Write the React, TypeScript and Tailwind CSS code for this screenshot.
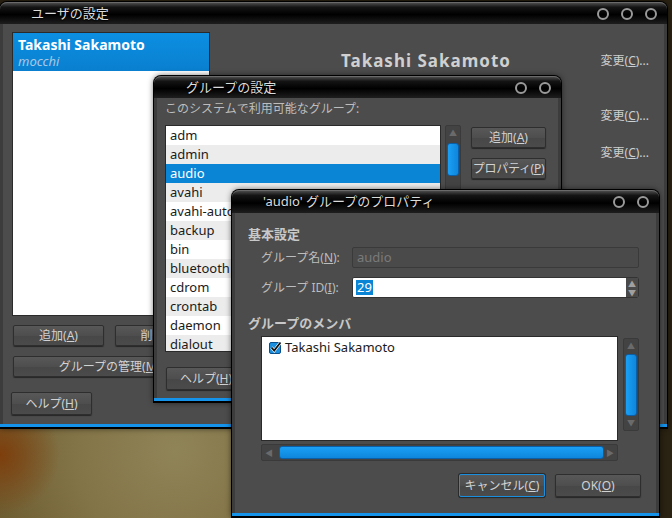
import * as React from 'react';

const FONT = "font-['Noto_Sans','Noto_Sans_CJK_JP',sans-serif]";

function Rings({ count }: { count: number }) {
  return (
    <div className="flex items-center gap-[12px] pr-[10px]">
      {Array.from({ length: count }).map((_, i) => (
        <span key={i} className="block h-[12px] w-[12px] rounded-full border-[2px] border-[#9a9a9a]" />
      ))}
    </div>
  );
}

interface WinProps {
  title: string;
  titlePad: string;
  rings: number;
  className: string;
  titleH: string;
  children: React.ReactNode;
}

function Win({ title, titlePad, rings, className, titleH, children }: WinProps) {
  return (
    <div className={`absolute flex flex-col rounded-t-[7px] bg-[#3c3c3c] shadow-[0_0_6px_rgba(0,0,0,0.7)] ring-1 ring-black ${className}`}>
      <div className={`flex ${titleH} shrink-0 items-center justify-between rounded-t-[7px] border-t border-[#6a6a6a] bg-[linear-gradient(#4a4a4a_0%,#141414_20%,#000_55%,#1e1e1e_100%)]`}>
        <span className={`${titlePad} text-[13px] text-[#dcdcdc] [text-shadow:0_1px_1px_#000]`}>{title}</span>
        <Rings count={rings} />
      </div>
      <div className="flex min-h-0 flex-1 flex-col border-x-[3px] border-[#3c3c3c] bg-[#4c4c4c]">{children}</div>
      <div className="h-[3px] shrink-0 bg-[#1592ea]" />
      <div className="h-[1px] shrink-0 bg-black" />
    </div>
  );
}

function Btn({ children, className = '', focus = false }: { children: React.ReactNode; className?: string; focus?: boolean }) {
  return (
    <div
      className={`flex items-center justify-center overflow-hidden whitespace-nowrap rounded-[2px] border text-[12px] text-[#d2d2d2] shadow-[0_1px_1px_rgba(0,0,0,0.5)] bg-[linear-gradient(#585858,#4e4e4e_50%,#474747_51%,#4b4b4b)] ${
        focus ? 'border-[#1a8fe0] ring-1 ring-[#2a2a2a]' : 'border-[#2e2e2e]'
      } ${className}`}
    >
      {children}
    </div>
  );
}

function VScroll({ className, thumb }: { className: string; thumb: string }) {
  return (
    <div className={`flex flex-col items-center rounded-[2px] border border-[#3a3a3a] bg-[#434343] ${className}`}>
      <span className="mt-[3px] text-[8px] leading-none text-[#6a6a6a]">▲</span>
      <div className={`w-[12px] rounded-[3px] border border-[#0a5fa8] bg-[linear-gradient(90deg,#1aa0f5,#0e86dc)] ${thumb}`} />
      <div className="flex-1" />
      <span className="mb-[3px] text-[8px] leading-none text-[#6a6a6a]">▼</span>
    </div>
  );
}

const groups = ['adm', 'admin', 'audio', 'avahi', 'avahi-autoipd', 'backup', 'bin', 'bluetooth', 'cdrom', 'crontab', 'daemon', 'dialout'];

export default function App() {
  return (
    <div
      className={`${FONT} relative h-[518px] w-[672px] overflow-hidden bg-[radial-gradient(circle_at_0_455px,#7e3e0c,transparent_60px),radial-gradient(circle_at_175px_450px,#8f8458,#837447_100px,#6a5a2e_200px,#4a3c1c_340px,#2a2212_480px)]`}
    >
      {/* ユーザの設定 */}
      <Win title="ユーザの設定" titlePad="pl-[31px]" rings={3} titleH="h-[22px]" className="left-[0px] top-[2px] h-[426px] w-[667px]">
        <div className="flex flex-1 flex-row">
          <div className="flex w-[210px] flex-col pl-[9px] pt-[8px]">
            <div className="h-[284px] w-[198px] border border-[#2a2a2a] bg-white">
              <div className="flex h-[38px] flex-col justify-center bg-[linear-gradient(#0c8fe2,#0a7fcf)] pl-[5px]">
                <span className="text-[14px] font-bold leading-[17px] text-white">Takashi Sakamoto</span>
                <span className="text-[13px] italic leading-[16px] text-[#a8c8e4]">mocchi</span>
              </div>
            </div>
            <div className="mt-[9px] flex gap-[11px] pl-[1px]">
              <Btn className="h-[21px] w-[91px]">
                追加(<u>A</u>)
              </Btn>
              <Btn className="h-[21px] w-[91px]">
                削除(<u>D</u>)
              </Btn>
            </div>
            <Btn className="ml-[1px] mt-[10px] h-[21px] w-[193px]">
              グループの管理(<u>M</u>)
            </Btn>
            <Btn className="-ml-[1px] mt-[15px] h-[23px] w-[81px]">
              ヘルプ(<u>H</u>)
            </Btn>
          </div>
          <div className="flex flex-1 flex-col pt-[26px]">
            <div className="flex h-[22px] items-center">
              <span className="ml-[128px] text-[17px] font-bold tracking-[1px] text-[#d0d0d0]">Takashi Sakamoto</span>
              <span className="ml-auto mr-[15px] text-[12px] text-[#cfcfcf]">
                変更(<u>C</u>)...
              </span>
            </div>
            <div className="mt-[33px] flex h-[22px] items-center justify-end">
              <span className="mr-[15px] text-[12px] text-[#cfcfcf]">
                変更(<u>C</u>)...
              </span>
            </div>
            <div className="mt-[15px] flex h-[22px] items-center justify-end">
              <span className="mr-[15px] text-[12px] text-[#cfcfcf]">
                変更(<u>C</u>)...
              </span>
            </div>
          </div>
        </div>
      </Win>

      {/* グループの設定 */}
      <Win title="グループの設定" titlePad="pl-[32px]" rings={2} titleH="h-[22px]" className="left-[154px] top-[76px] h-[326px] w-[407px]">
        <div className="flex flex-1 flex-col pl-[8px] pt-[1px]">
          <span className="text-[12px] leading-[20px] text-[#bdbdbd]">このシステムで利用可能なグループ:</span>
          <div className="mt-[6px] flex">
            <div className="h-[227px] w-[276px] overflow-hidden border border-[#2a2a2a] bg-white">
              {groups.map((g, i) => (
                <div
                  key={g}
                  className={`flex h-[19px] items-center whitespace-nowrap pl-[4px] text-[13px] ${
                    i === 2 ? 'bg-[#0a85d6] text-white' : i % 2 === 1 ? 'bg-[#ececec] text-[#1a1a1a]' : 'bg-white text-[#1a1a1a]'
                  }`}
                >
                  {g}
                </div>
              ))}
            </div>
            <VScroll className="ml-[4px] h-[227px] w-[16px]" thumb="mt-[6px] h-[33px]" />
            <div className="ml-[10px] flex flex-col gap-[10px] pt-[2px]">
              <Btn className="h-[21px] w-[75px]">
                追加(<u>A</u>)
              </Btn>
              <Btn className="h-[21px] w-[75px] tracking-[-0.3px]">
                プロパティ(<u>P</u>)
              </Btn>
              <Btn className="h-[21px] w-[75px]">
                削除(<u>D</u>)
              </Btn>
            </div>
          </div>
          <Btn className="ml-[1px] mt-[15px] h-[23px] w-[80px]">
            ヘルプ(<u>H</u>)
          </Btn>
        </div>
      </Win>

      {/* 'audio' グループのプロパティ */}
      <Win title="'audio' グループのプロパティ" titlePad="pl-[31px]" rings={2} titleH="h-[23px]" className="left-[232px] top-[190px] h-[327px] w-[427px]">
        <div className="flex flex-1 flex-col pl-[13px] pr-[15px] pt-[12px]">
          <span className="text-[13px] font-bold leading-[18px] text-[#c8c8c8]">基本設定</span>
          <div className="mt-[4px] flex h-[21px] items-center pl-[13px]">
            <span className="w-[91px] text-[12px] text-[#bdbdbd]">
              グループ名(<u>N</u>):
            </span>
            <div className="flex h-[21px] w-[287px] items-center rounded-[2px] border border-[#3a3a3a] bg-[#4a4a4a] pl-[4px] text-[13px] text-[#7a7a7a]">
              audio
            </div>
          </div>
          <div className="mt-[9px] flex h-[21px] items-center pl-[13px]">
            <span className="w-[91px] text-[12px] text-[#bdbdbd]">
              グループ ID(<u>I</u>):
            </span>
            <div className="flex h-[21px] w-[287px] items-center rounded-[2px] border border-[#333] bg-white pl-[3px]">
              <span className="bg-[#0a85d6] px-[1px] text-[13px] leading-[15px] text-white">29</span>
              <div className="ml-auto flex h-full w-[12px] flex-col items-center justify-center bg-[#4a4a4a] text-[8px] leading-[9px] text-[#a0a0a0]">
                <span>▲</span>
                <span>▼</span>
              </div>
            </div>
          </div>
          <span className="mt-[16px] text-[13px] font-bold leading-[18px] text-[#c8c8c8]">グループのメンバ</span>
          <div className="mt-[4px] flex pl-[13px]">
            <div className="h-[105px] w-[357px] border border-[#2a2a2a] bg-white">
              <div className="flex h-[20px] items-center pl-[7px] pt-[1px]">
                <svg width="13" height="13" viewBox="0 0 13 13">
                  <rect x="0.5" y="1.5" width="11" height="11" rx="1.5" fill="#1a8fe0" stroke="#0b4f8a" />
                  <path d="M2.5 6.5 L5.2 9.6 L11.5 1.5" fill="none" stroke="#fff" strokeWidth="3" />
                  <path d="M2.5 6.5 L5.2 9.6 L11.5 1.5" fill="none" stroke="#111" strokeWidth="1.8" />
                </svg>
                <span className="ml-[3px] text-[13px] text-[#1a1a1a]">Takashi Sakamoto</span>
              </div>
            </div>
            <VScroll className="ml-[5px] mt-[2px] h-[93px] w-[16px]" thumb="mt-[4px] h-[62px]" />
          </div>
          <div className="ml-[13px] mt-[3px] flex h-[17px] w-[357px] items-center rounded-[2px] border border-[#3a3a3a] bg-[#434343] px-[3px]">
            <span className="text-[8px] leading-none text-[#6a6a6a]">◀</span>
            <div className="ml-[6px] h-[13px] w-[325px] rounded-[3px] border border-[#0a5fa8] bg-[linear-gradient(#1aa0f5,#0e86dc)]" />
            <span className="ml-auto text-[8px] leading-none text-[#6a6a6a]">▶</span>
          </div>
          <div className="mt-[13px] flex justify-end gap-[10px]">
            <Btn focus className="h-[23px] w-[86px]">
              キャンセル(<u>C</u>)
            </Btn>
            <Btn className="h-[23px] w-[86px]">
              OK(<u>O</u>)
            </Btn>
          </div>
        </div>
      </Win>
    </div>
  );
}
